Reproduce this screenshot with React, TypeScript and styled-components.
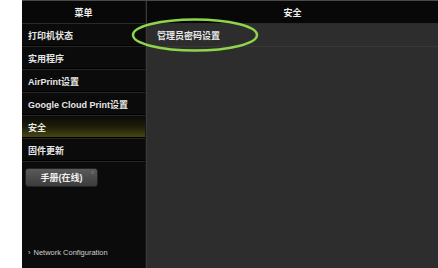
import styled, { createGlobalStyle } from "styled-components";

const GlobalStyle = createGlobalStyle`
  html, body {
    margin: 0;
    padding: 0;
    background: #ffffff;
  }
  body {
    font-family: "Liberation Sans", "Noto Sans CJK SC", sans-serif;
  }
`;

const Frame = styled.div`
  position: relative;
  margin-left: 22px;
  width: 416px;
  height: 268px;
  display: grid;
  grid-template-columns: 124px 1fr;
  border-top: 1px solid #4a4a4a;
  box-sizing: border-box;
  overflow: hidden;
`;

const Sidebar = styled.nav`
  display: flex;
  flex-direction: column;
  background: #0b0b0b;
  border-right: 1px solid #161616;
`;

const Main = styled.section`
  display: flex;
  flex-direction: column;
  background: #2d2d2d;
  border-left: 1px solid #3a3a3a;
`;

const Header = styled.div`
  height: 22px;
  display: flex;
  align-items: center;
  justify-content: center;
  background: #080808;
  color: #eeeeee;
  font-size: 9px;
  font-weight: bold;
  border-bottom: 1px solid #2a2a2a;
`;

const MenuItem = styled.div<{ $active?: boolean }>`
  height: 22px;
  display: flex;
  align-items: center;
  padding-left: 6px;
  color: #e6e6e6;
  font-size: 9px;
  font-weight: bold;
  border-bottom: 1px solid #262626;
  box-shadow: inset 0 -1px 0 #000;
  background: ${(p) =>
    p.$active
      ? "linear-gradient(to bottom, #0b0b0b 0%, #1c1c08 45%, #4a4a14 100%)"
      : "transparent"};
`;

const ButtonRow = styled.div`
  padding: 5px 0 0 3px;
`;

const ManualButton = styled.button`
  position: relative;
  width: 73px;
  height: 19px;
  border: 1px solid #222;
  border-radius: 3px;
  background: linear-gradient(to bottom, #5a5a5a, #3c3c3c);
  color: #f0f0f0;
  font-family: "Liberation Sans", "Noto Sans CJK SC", sans-serif;
  font-size: 9px;
  font-weight: bold;
  padding: 0;
  &::after {
    content: "";
    position: absolute;
    top: 2px;
    right: 3px;
    width: 3px;
    height: 3px;
    border-radius: 50%;
    background: #6a6a6a;
  }
`;

const Spacer = styled.div`
  flex: 1;
`;

const FooterLink = styled.div`
  padding: 0 0 11px 6px;
  color: #cfcfcf;
  font-size: 7.5px;
  display: flex;
  align-items: center;
  gap: 3px;
`;

const Row = styled.div`
  height: 22px;
  display: flex;
  align-items: center;
  padding-left: 10px;
  color: #e6e6e6;
  font-size: 9px;
  font-weight: bold;
  border-bottom: 1px solid #383838;
`;

const Annotation = styled.svg`
  position: absolute;
  left: 109px;
  top: 16px;
`;

export default function App() {
  return (
    <>
      <GlobalStyle />
      <Frame>
        <Sidebar>
          <Header>菜单</Header>
          <MenuItem>打印机状态</MenuItem>
          <MenuItem>实用程序</MenuItem>
          <MenuItem>AirPrint设置</MenuItem>
          <MenuItem>Google Cloud Print设置</MenuItem>
          <MenuItem $active>安全</MenuItem>
          <MenuItem>固件更新</MenuItem>
          <ButtonRow>
            <ManualButton>手册(在线)</ManualButton>
          </ButtonRow>
          <Spacer />
          <FooterLink>
            <span>›</span>
            <span>Network Configuration</span>
          </FooterLink>
        </Sidebar>
        <Main>
          <Header>安全</Header>
          <Row>管理员密码设置</Row>
        </Main>
        <Annotation width="128" height="36" viewBox="0 0 128 36">
          <ellipse
            cx="64"
            cy="18"
            rx="62"
            ry="15.5"
            fill="none"
            stroke="#8fd44a"
            strokeWidth="2.5"
          />
        </Annotation>
      </Frame>
    </>
  );
}
